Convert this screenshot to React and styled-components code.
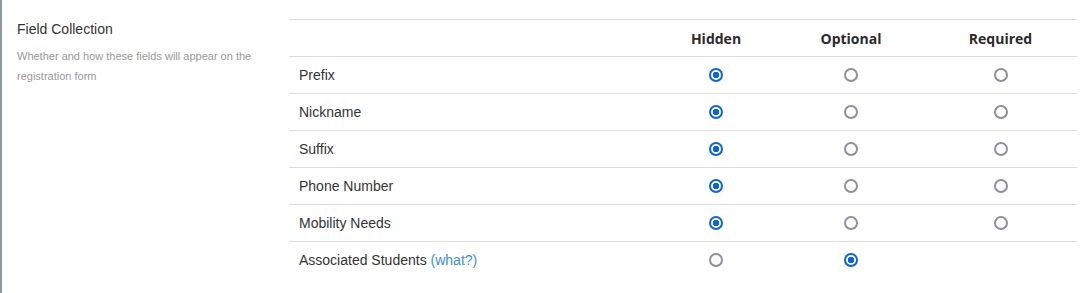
import React, { useState } from "react";
import styled, { createGlobalStyle } from "styled-components";

const Global = createGlobalStyle`
  html, body {
    margin: 0;
    padding: 0;
    background: #fff;
  }
  body {
    font-family: "Liberation Sans", Arial, sans-serif;
    color: #333;
  }
`

const Page = styled.section`
  display: flex;
  min-height: 293px;
  border-left: 2px solid #8e9ba7;
  box-sizing: border-box;
`
const Side = styled.div`
  width: 287px;
  flex: none;
  box-sizing: border-box;
  padding: 20px 20px 0 15px;
`
const Title = styled.h3`
  margin: 0;
  font-size: 14px;
  line-height: 18px;
  font-weight: 400;
  color: #333;
`
const Desc = styled.p`
  margin: 8px 0 0;
  font-size: 11px;
  line-height: 20px;
  color: #999;
`
const Table = styled.table`
  width: 788px;
  margin-top: 19px;
  border-collapse: collapse;
  table-layout: fixed;
  align-self: flex-start;
`
const Head = styled.th`
  width: ${p => p.w}px;
  height: 36px;
  padding: 0;
  font-family: "Open Sans", "Liberation Sans", sans-serif;
  font-size: 14px;
  font-weight: 700;
  color: #2a2a2a;
  text-align: center;
  border-top: 1px solid #ddd;
  border-bottom: 1px solid #ddd;
`
const Row = styled.tr`
  & td {
    border-bottom: ${p => p.last ? "none" : "1px solid #ddd"};
  }
`
const Label = styled.td`
  height: 36px;
  padding: 0 0 0 10px;
  font-size: 14px;
  color: #333;
`
const Cell = styled.td`
  padding: 0;
  text-align: center;
  vertical-align: middle;
`
const Radio = styled.input`
  appearance: none;
  -webkit-appearance: none;
  margin: 0;
  width: 14px;
  height: 14px;
  box-sizing: border-box;
  border-radius: 50%;
  border: 2px solid #8f8f9d;
  background: #fff;
  vertical-align: middle;
  position: relative;
  top: -1px;
  cursor: pointer;
  &:checked {
    border-color: #0a64e0;
    background: radial-gradient(circle, #0a64e0 0 3px, #fff 3.5px);
  }
`
const What = styled.a`
  color: #3b8fd6;
  text-decoration: none;
`

const fields = [
  { name: "Prefix", value: "hidden" },
  { name: "Nickname", value: "hidden" },
  { name: "Suffix", value: "hidden" },
  { name: "Phone Number", value: "hidden" },
  { name: "Mobility Needs", value: "hidden" },
  { name: "Associated Students", value: "optional", noRequired: true, help: true },
]

export default function App() {
  const [values, setValues] = useState(fields.map(f => f.value))

  const set = (i, v) => setValues(vs => vs.map((x, j) => j === i ? v : x))

  return (
    <>
      <Global />
      <Page>
        <Side>
          <Title>Field Collection</Title>
          <Desc>Whether and how these fields will appear on the registration form</Desc>
        </Side>
        <Table>
          <thead>
            <tr>
              <Head w={365}></Head>
              <Head w={124}>Hidden</Head>
              <Head w={146}>Optional</Head>
              <Head w={153}>Required</Head>
            </tr>
          </thead>
          <tbody>
            {fields.map((f, i) => (
              <Row key={f.name} last={i === fields.length - 1}>
                <Label>
                  {f.name}
                  {f.help && <> <What href="#">(what?)</What></>}
                </Label>
                {["hidden", "optional", "required"].map(opt => (
                  <Cell key={opt}>
                    {!(opt === "required" && f.noRequired) && (
                      <Radio
                        type="radio"
                        name={f.name}
                        checked={values[i] === opt}
                        onChange={() => set(i, opt)}
                      />
                    )}
                  </Cell>
                ))}
              </Row>
            ))}
          </tbody>
        </Table>
      </Page>
    </>
  )
}
